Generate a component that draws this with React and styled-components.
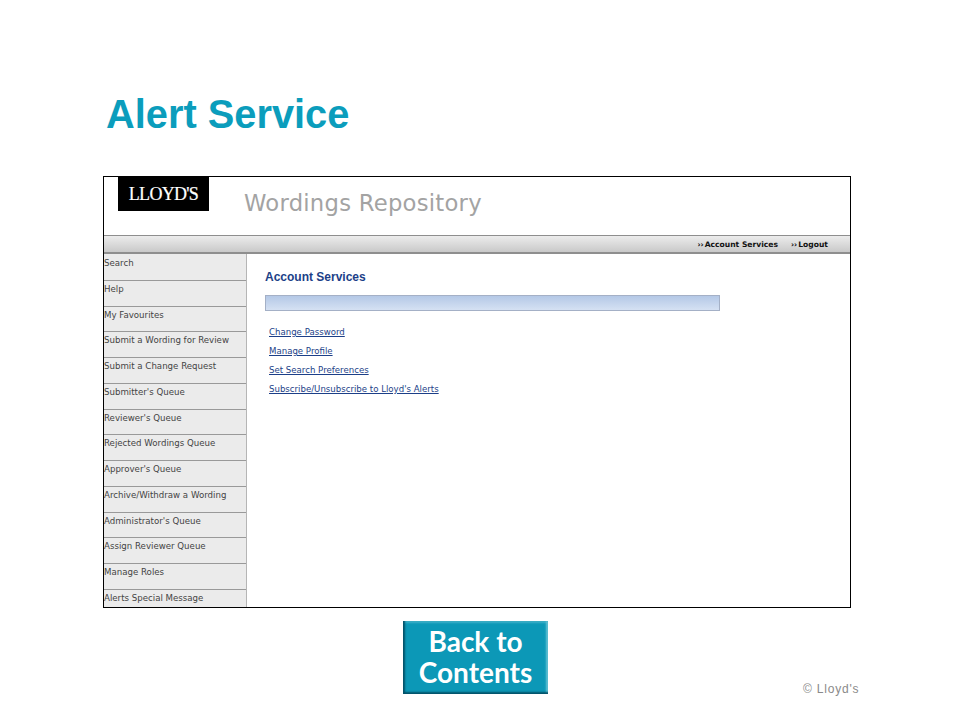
import React from 'react'
import styled, {createGlobalStyle} from 'styled-components'

const GlobalStyle = createGlobalStyle`
  html, body {
    margin: 0;
    padding: 0;
    background: #fff;
  }
`

const Page = styled.div`
  width: 960px;
  height: 720px;
  overflow: hidden;
  padding: 93px 0 0 103px;
  box-sizing: border-box;
`

const Title = styled.h1`
  margin: 0 0 0 3px;
  height: 83px;
  font: bold 39.8px/43px "Liberation Sans", Arial, sans-serif;
  color: #0b9dbc;
`

const Frame = styled.div`
  width: 748px;
  height: 432px;
  box-sizing: border-box;
  border: 1px solid #000;
  display: flex;
  flex-direction: column;
  overflow: hidden;
`

const Header = styled.header`
  height: 58px;
  flex: none;
  display: flex;
  align-items: flex-start;
  padding-left: 14px;
`

const Logo = styled.div`
  width: 91px;
  height: 34px;
  background: #000;
  color: #fff;
  display: flex;
  align-items: center;
  justify-content: center;
  font: 18px "Liberation Serif", "Times New Roman", serif;
  letter-spacing: -0.7px;
  -webkit-text-stroke: 0.2px #fff;
`

const AppName = styled.div`
  margin: 13px 0 0 35px;
  font: 22.7px/27px "DejaVu Sans", Verdana, sans-serif;
  letter-spacing: 0.25px;
  color: #a3a3a3;
`

const TopBar = styled.nav`
  height: 19px;
  flex: none;
  box-sizing: border-box;
  border-top: 1px solid #8e8e8e;
  border-bottom: 2px solid #8e8e8e;
  background: linear-gradient(#ececec, #c9c9c9);
  display: flex;
  justify-content: flex-end;
  align-items: center;
  gap: 13px;
  padding: 1px 22px 0 0;
`

const TopLink = styled.span`
  font: bold 7.6px "DejaVu Sans", Verdana, sans-serif;
  color: #111;

  i {
    font-style: normal;
    margin-right: 1px;
  }
`

const Body = styled.div`
  flex: 1;
  display: flex;
  min-height: 0;
`

const Sidebar = styled.ul`
  width: 142px;
  flex: none;
  margin: 0;
  padding: 1px 0 0;
  list-style: none;
  background: #ebebeb;
  border-right: 1px solid #b5b5b5;
  box-sizing: content-box;
`

const SideItem = styled.li`
  height: 25.77px;
  box-sizing: border-box;
  border-bottom: 1px solid #999;
  padding-top: 2px;
  font: 8.65px/12px "DejaVu Sans", Verdana, sans-serif;
  color: #444;
  white-space: nowrap;

  &:last-child {
    border-bottom: 0;
  }
`

const Content = styled.main`
  flex: 1;
  padding: 16px 0 0 18px;
`

const Heading = styled.h2`
  margin: 0;
  font: bold 12px/14px "Liberation Sans", Arial, sans-serif;
  color: #1c3f88;
`

const Banner = styled.div`
  width: 455px;
  height: 16px;
  box-sizing: border-box;
  margin-top: 11px;
  border: 1px solid #a4b0c6;
  background: linear-gradient(#b4c8e6, #d5e1f3);
`

const Links = styled.div`
  margin: 15px 0 0 4px;
  display: flex;
  flex-direction: column;
  align-items: flex-start;
  gap: 7px;
`

const TextLink = styled.a`
  font: 8.6px/12px "DejaVu Sans", Verdana, sans-serif;
  color: #1c3f88;
  text-decoration: underline;
`

const Footer = styled.footer`
  display: flex;
  align-items: flex-end;
  margin-top: 13px;
  padding-left: 300px;
`

const BackButton = styled.div`
  width: 145px;
  height: 73px;
  box-sizing: border-box;
  padding-top: 5px;
  background: #0c98b7;
  box-shadow:
    inset 3px 0 2px -1px #04536a,
    inset 0 -3px 2px -1px #04536a,
    inset -3px 0 2px -1px #63c3d6,
    inset 0 3px 2px -1px #3db0c9;
  color: #fff;
  text-align: center;
  font: bold 28px/31px "Lato", "Open Sans", sans-serif;
`

const Copyright = styled.div`
  margin: 0 0 -2px 255px;
  font: 12px/14px "Liberation Sans", Arial, sans-serif;
  letter-spacing: 0.8px;
  color: #8a8a8a;
  white-space: nowrap;
`

const menu = [
  'Search',
  'Help',
  'My Favourites',
  'Submit a Wording for Review',
  'Submit a Change Request',
  "Submitter's Queue",
  "Reviewer's Queue",
  'Rejected Wordings Queue',
  "Approver's Queue",
  'Archive/Withdraw a Wording',
  "Administrator's Queue",
  'Assign Reviewer Queue',
  'Manage Roles',
  'Alerts Special Message',
]

const links = [
  'Change Password',
  'Manage Profile',
  'Set Search Preferences',
  "Subscribe/Unsubscribe to Lloyd's Alerts",
]

const App = () => {
  return (
    <Page>
      <GlobalStyle />
      <Title>Alert Service</Title>
      <Frame>
        <Header>
          <Logo>LLOYD&apos;S</Logo>
          <AppName>Wordings Repository</AppName>
        </Header>
        <TopBar>
          <TopLink><i>››</i>Account Services</TopLink>
          <TopLink><i>››</i>Logout</TopLink>
        </TopBar>
        <Body>
          <Sidebar>
            {menu.map(item => <SideItem key={item}>{item}</SideItem>)}
          </Sidebar>
          <Content>
            <Heading>Account Services</Heading>
            <Banner />
            <Links>
              {links.map(link => <TextLink key={link}>{link}</TextLink>)}
            </Links>
          </Content>
        </Body>
      </Frame>
      <Footer>
        <BackButton>Back to<br />Contents</BackButton>
        <Copyright>© Lloyd&apos;s</Copyright>
      </Footer>
    </Page>
  )
}

export default App
